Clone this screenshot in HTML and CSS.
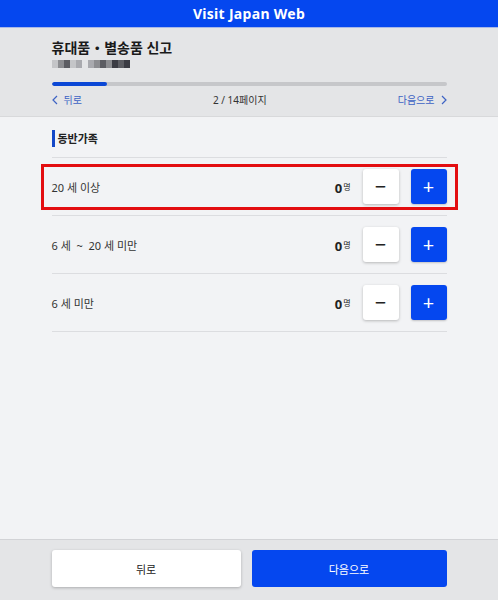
FILE: index.html
```html
<!DOCTYPE html>
<html lang="ko">

<head>
    <meta charset="UTF-8" />
    <title>Visit Japan Web</title>
    <link rel="stylesheet" href="styles.css">
</head>

<body>

    <header class="top-bar">Visit Japan Web</header>

    <div class="summary">
        <div class="inner">
            <h1 class="page-title">휴대품・별송품 신고</h1>
            <div class="masked-name">
                <span class="px p1"></span><span class="px p2"></span><span class="px p3"></span><span class="px p1"></span><span class="px p5"></span>
                <span class="gap"></span>
                <span class="px p5"></span><span class="px p2"></span><span class="px p3"></span><span class="px p2"></span><span class="px p4"></span><span class="px p3"></span><span class="px p4"></span>
            </div>
            <div class="progress">
                <div class="progress-fill" style="width: 14%"></div>
            </div>
            <div class="pager">
                <span class="pager-link">
                    <svg class="chev" viewBox="0 0 6 10"><path d="M5 1 L1 5 L5 9" /></svg>
                    뒤로
                </span>
                <span class="pager-count">2 / 14페이지</span>
                <span class="pager-link">
                    다음으로
                    <svg class="chev" viewBox="0 0 6 10"><path d="M1 1 L5 5 L1 9" /></svg>
                </span>
            </div>
        </div>
    </div>

    <main class="inner content">
        <h2 class="section-title">동반가족</h2>

        <div class="rows">
            <div class="row">
                <div class="row-box highlight">
                    <span class="row-label">20 세 이상</span>
                    <span class="count"><b>0</b><small>명</small></span>
                    <button class="step minus">&minus;</button>
                    <button class="step plus">+</button>
                </div>
            </div>
            <div class="row">
                <div class="row-box">
                    <span class="row-label">6 세 &nbsp;~&nbsp; 20 세 미만</span>
                    <span class="count"><b>0</b><small>명</small></span>
                    <button class="step minus">&minus;</button>
                    <button class="step plus">+</button>
                </div>
            </div>
            <div class="row">
                <div class="row-box">
                    <span class="row-label">6 세 미만</span>
                    <span class="count"><b>0</b><small>명</small></span>
                    <button class="step minus">&minus;</button>
                    <button class="step plus">+</button>
                </div>
            </div>
        </div>
    </main>

    <footer class="footer">
        <div class="inner footer-buttons">
            <button class="btn btn-back">뒤로</button>
            <button class="btn btn-next">다음으로</button>
        </div>
    </footer>

</body>

</html>
```

FILE: styles.css
```css
body {
    margin: 0;
    font-family: "Noto Sans", "Noto Sans CJK KR", sans-serif;
    background: #f2f3f5;
    color: #222;
    height: 600px;
    display: flex;
    flex-direction: column;
}

.inner {
    width: 395px;
    margin: 0 auto;
}

.top-bar {
    height: 28px;
    line-height: 27px;
    background: #0547ef;
    color: #fff;
    text-align: center;
    font-size: 14px;
    font-weight: bold;
    letter-spacing: 0.3px;
    border-bottom: 1px solid #a8b8e8;
    box-sizing: border-box;
}

.summary {
    background: #e4e5e7;
    padding: 10px 0 8px;
    border-bottom: 1px solid #d8d9db;
}

.page-title {
    margin: 0;
    font-size: 14px;
    font-weight: bold;
    line-height: 19px;
    color: #1a1a1a;
}

.masked-name {
    display: flex;
    height: 8px;
    margin-top: 3px;
}

.px {
    width: 6px;
    height: 8px;
}

.p1 { background: #c4c5c8; }
.p2 { background: #8c8d91; }
.p3 { background: #5c5d63; }
.p4 { background: #3b3c44; }
.p5 { background: #a9aaaf; }

.gap {
    width: 6px;
}

.progress {
    margin-top: 14px;
    height: 4px;
    background: #c6c7ca;
    border-radius: 2px;
    overflow: hidden;
}

.progress-fill {
    height: 100%;
    background: #0b48d6;
    border-radius: 2px;
}

.pager {
    display: flex;
    justify-content: space-between;
    align-items: center;
    margin-top: 6px;
    font-size: 10px;
    line-height: 16px;
}

.pager-link {
    display: flex;
    align-items: center;
    gap: 6px;
    color: #3d63c4;
}

.chev {
    width: 6px;
    height: 10px;
    fill: none;
    stroke: #3d63c4;
    stroke-width: 1.2;
}

.pager-count {
    color: #333;
}

.content {
    flex: 1;
    padding-top: 13px;
}

.section-title {
    margin: 0;
    font-size: 11px;
    font-weight: bold;
    line-height: 17px;
    border-left: 3px solid #1448c8;
    padding-left: 3px;
    color: #222;
}

.rows {
    margin-top: 10px;
    border-top: 1px solid #dcdde0;
}

.row {
    height: 57px;
    border-bottom: 1px solid #dcdde0;
    display: flex;
    align-items: center;
}

.row-box {
    flex: 1;
    display: flex;
    align-items: center;
    height: 40px;
    margin: 0 -11px;
    padding: 0 8px;
    border: 3px solid transparent;
}

.row-box.highlight {
    border-color: #e30d10;
}

.row-label {
    flex: 1;
    font-size: 11px;
    color: #333;
}

.count {
    margin-right: 12px;
}

.count b {
    font-size: 13px;
}

.count small {
    font-size: 8px;
    vertical-align: 3px;
    margin-left: 1px;
}

.step {
    width: 36px;
    height: 35px;
    border: none;
    border-radius: 3px;
    font-family: inherit;
    font-size: 20px;
    line-height: 1;
    padding: 0;
    cursor: pointer;
}

.minus {
    background: #fff;
    color: #222;
    box-shadow: 0 1px 3px rgba(0, 0, 0, 0.25);
    margin-right: 12px;
}

.plus {
    background: #0547ef;
    color: #fff;
    box-shadow: 0 1px 2px rgba(0, 0, 0, 0.2);
}

.footer {
    background: #e4e5e7;
    border-top: 1px solid #d2d3d6;
    height: 61px;
    box-sizing: border-box;
}

.footer-buttons {
    display: flex;
    gap: 11px;
    padding-top: 10px;
}

.btn {
    height: 37px;
    border: none;
    border-radius: 3px;
    font-family: inherit;
    font-size: 11px;
    cursor: pointer;
}

.btn-back {
    width: 189px;
    background: #fff;
    color: #222;
    box-shadow: 0 1px 3px rgba(0, 0, 0, 0.25);
}

.btn-next {
    flex: 1;
    background: #0547ef;
    color: #fff;
}
```
